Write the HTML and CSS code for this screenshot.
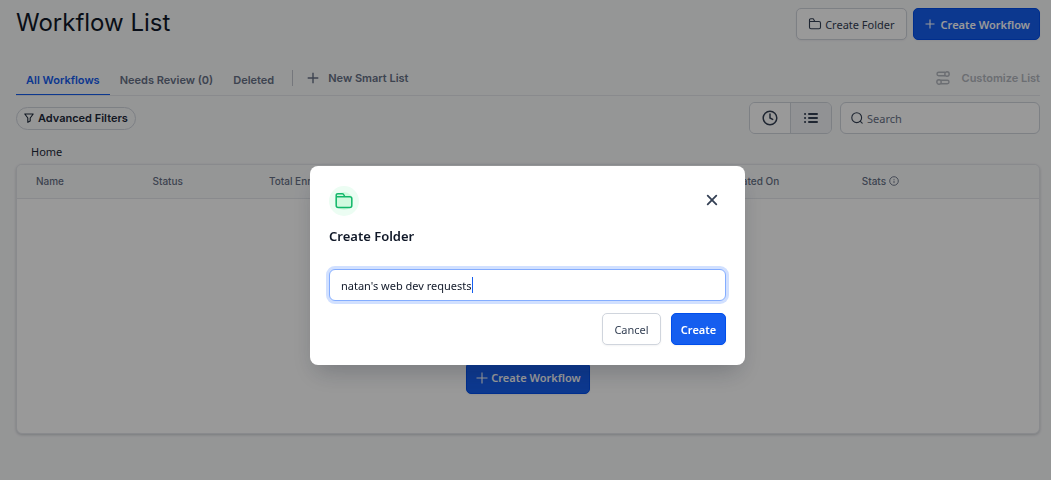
FILE: index.html
```html
<!DOCTYPE html>
<html lang="en">
<head>
<meta charset="utf-8">
<meta name="viewport" content="width=device-width, initial-scale=1">
<title>Workflow List</title>
<link rel="stylesheet" href="styles.css">
</head>
<body>
<main class="page">
  <header class="page-header">
    <h1 class="page-title">Workflow List</h1>
    <div class="header-actions">
      <button class="btn btn-folder" type="button">
        <svg class="icon" width="14" height="14" viewBox="0 0 14 14" fill="none" stroke="currentColor" stroke-width="1.1" stroke-linejoin="round"><path d="M1.5 4.5V3Q1.500 1.800 2.700 1.800H5.200L6.900 4.500M1.500 4.500H11Q12.500 4.500 12.500 6V10.200Q12.500 11.700 11 11.700H3Q1.500 11.700 1.500 10.200Z"/></svg>
        Create Folder
      </button>
      <button class="btn btn-primary btn-workflow" type="button">
        <svg class="icon" width="10" height="10" viewBox="0 0 10 10" stroke="currentColor" stroke-width="1.1"><path d="M5 .5v9M.5 5h9"/></svg>
        Create Workflow
      </button>
    </div>
  </header>

  <nav class="tabs">
    <a class="tab tab-active" href="#all">All Workflows</a>
    <a class="tab" href="#review">Needs Review (0)</a>
    <a class="tab" href="#deleted">Deleted</a>
    <span class="tab-divider"></span>
    <button class="tab-button" type="button">
      <svg class="icon" width="12" height="12" viewBox="0 0 12 12" stroke="currentColor" stroke-width="1.4"><path d="M6 .7v10.600M.7 6h10.600"/></svg>
      New Smart List
    </button>
    <button class="tab-button customize" type="button">
      <svg class="icon" width="14" height="14" viewBox="0 0 14 14" fill="none" stroke="currentColor" stroke-width="1.4"><path d="M9 1.300H2.700a1.700 1.700 0 0 0 0 3.400H9M5 9.300h6.300a1.700 1.700 0 0 1 0 3.400H5"/><circle cx="11" cy="3" r="2.200"/><circle cx="3" cy="11" r="2.200"/></svg>
      Customize List
    </button>
  </nav>

  <div class="toolbar">
    <button class="filter-pill" type="button">
      <svg class="icon" width="10" height="10" viewBox="0 0 10 10" fill="none" stroke="currentColor" stroke-width="1.100" stroke-linejoin="round"><path d="M.8 1h8.400L6.200 5v3L3.800 9.300V5Z"/></svg>
      Advanced Filters
    </button>
    <div class="toolbar-right">
      <div class="view-switch">
        <button class="view" type="button" aria-label="Recent">
          <svg class="icon" width="16" height="16" viewBox="0 0 16 16" fill="none" stroke="currentColor" stroke-width="1.500" stroke-linecap="round" stroke-linejoin="round"><circle cx="8" cy="8" r="6.800"/><path d="M8 4v4l2.700 1.400"/></svg>
        </button>
        <button class="view view-active" type="button" aria-label="List">
          <svg class="icon" width="16" height="16" viewBox="0 0 16 16" fill="none" stroke="currentColor" stroke-width="2" stroke-linecap="round"><path d="M6 4H14M6 8H14M6 12H14M2 4h.1M2 8h.1M2 12h.1"/></svg>
        </button>
      </div>
      <label class="search">
        <svg class="icon" width="12" height="12" viewBox="0 0 12 12" fill="none" stroke="currentColor" stroke-width="1.100" stroke-linecap="round"><circle cx="5.700" cy="5.700" r="4.900"/><path d="m9.300 9.300 1.900 1.900"/></svg>
        <input class="search-input" type="text" placeholder="Search" aria-label="Search">
      </label>
    </div>
  </div>

  <a class="breadcrumb" href="#home">Home</a>

  <section class="card">
    <table class="workflow-table">
      <thead>
        <tr>
          <th class="col-name">Name</th>
          <th class="col-status">Status</th>
          <th class="col-total">Total Enrolled</th>
          <th class="col-active">Active Enrolled</th>
          <th class="col-updated">Last Updated</th>
          <th class="col-created">Created On</th>
          <th class="col-stats"><span class="stats-label">Stats <svg class="icon" width="10" height="10" viewBox="0 0 10 10" fill="none" stroke="currentColor" stroke-width=".9"><circle cx="5" cy="5" r="4.300"/><path d="M5 4.700v2.400M5 2.900v.9"/></svg></span></th>
        </tr>
      </thead>
    </table>
    <div class="card-empty">
      <button class="btn btn-primary btn-empty" type="button">
        <svg class="icon" width="12" height="12" viewBox="0 0 12 12" stroke="currentColor" stroke-width="1.100"><path d="M6 .5v11M.5 6h11"/></svg>
        Create Workflow
      </button>
    </div>
  </section>
</main>

<div class="overlay">
  <form class="modal" role="dialog" aria-labelledby="modal-title">
    <div class="modal-top">
      <span class="modal-badge">
        <svg class="icon" width="20" height="20" viewBox="0 0 20 20" fill="none" stroke="#12b76a" stroke-width="1.500" stroke-linejoin="round"><circle cx="10" cy="10" r="9" fill="#d1fadf" stroke="none"/><path d="M2.200 6V4.400Q2.200 2.700 3.900 2.700H8.300Q9.500 2.700 10 4L10.700 5.700M2.200 5.700H15.800Q17.800 5.700 17.800 7.700V14.600Q17.800 16.600 15.800 16.600H4.200Q2.200 16.600 2.200 14.600Z"/></svg>
      </span>
      <button class="modal-close" type="button" aria-label="Close">
        <svg class="icon" width="12" height="12" viewBox="0 0 12 12" stroke="currentColor" stroke-width="1.800" stroke-linecap="round"><path d="m1.700 1.700 8.600 8.600M10.300 1.700l-8.600 8.600"/></svg>
      </button>
    </div>
    <h2 class="modal-title" id="modal-title">Create Folder</h2>
    <div class="name-field">
      <input class="name-input" type="text" value="natan's web dev requests" aria-label="Folder name">
      <span class="caret"></span>
    </div>
    <div class="modal-actions">
      <button class="btn btn-cancel" type="button">Cancel</button>
      <button class="btn btn-primary btn-create" type="submit">Create</button>
    </div>
  </form>
</div>
</body>
</html>
```
FILE: styles.css
```css
* {
  box-sizing: border-box;
}

body {
  margin: 0;
  background: #f9fafb;
  color: #101828;
  font-family: "Noto Sans", "Open Sans", sans-serif;
  font-size: 11px;
}

button,
input {
  font: inherit;
  margin: 0;
}

a {
  text-decoration: none;
}

.icon {
  display: block;
  flex: none;
}

.page {
  padding: 8px 11px 24px 16px;
}

.page-header {
  display: flex;
  justify-content: space-between;
  align-items: flex-start;
}

.page-title {
  margin: 0;
  font: 400 24px/30px Inter, sans-serif;
}

.header-actions {
  display: flex;
  gap: 6px;
}

.btn {
  display: flex;
  align-items: center;
  justify-content: center;
  height: 32px;
  border: 1px solid #d0d5dd;
  border-radius: 5px;
  background: #fff;
  color: #344054;
  box-shadow: 0 1px 2px rgba(16, 24, 40, 0.05);
  white-space: nowrap;
}

.btn-primary {
  border-color: #004eeb;
  background: #155eef;
  color: #fff;
  font-weight: 600;
}

.btn-folder {
  gap: 3px;
  padding: 0 11px;
}

.btn-workflow {
  gap: 6px;
  padding: 0 9px 0 11px;
}

.tabs {
  display: flex;
  align-items: stretch;
  height: 32px;
  margin-top: 24px;
  border-bottom: 1px solid #e4e7ec;
  font: 600 11px/16px Inter, sans-serif;
  color: #667085;
}

.tab {
  padding: 8px 10px 6px;
  color: inherit;
}

.tab-active {
  border-bottom: 1px solid #155eef;
  color: #155eef;
}

.tab-divider {
  width: 1px;
  height: 16px;
  margin: 6px 14px 0 8px;
  background: #c3c7cf;
}

.tab-button {
  display: flex;
  align-items: center;
  gap: 9px;
  height: 28px;
  padding: 0;
  border: 0;
  background: none;
  color: #667085;
}

.customize {
  gap: 12px;
  margin-left: auto;
  color: #b3b7be;
}

.toolbar {
  display: flex;
  align-items: center;
  justify-content: space-between;
  margin-top: 6px;
}

.filter-pill {
  display: flex;
  align-items: center;
  gap: 4px;
  height: 23px;
  padding: 0 7px;
  border: 1px solid #d0d5dd;
  border-radius: 12px;
  background: none;
  color: #1d2939;
  font: 600 11px/16px Inter, sans-serif;
}

.toolbar-right {
  display: flex;
  gap: 8px;
}

.view-switch {
  display: flex;
  border: 1px solid #d0d5dd;
  border-radius: 6px;
  overflow: hidden;
}

.view {
  display: flex;
  align-items: center;
  justify-content: center;
  width: 40px;
  height: 30px;
  padding: 0;
  border: 0;
  background: #fff;
  color: #344054;
}

.view-active {
  width: 41px;
  border-left: 1px solid #d0d5dd;
  background: #f2f4f7;
}

.search {
  display: flex;
  align-items: center;
  gap: 4px;
  width: 200px;
  height: 32px;
  padding: 0 10px;
  border: 1px solid #d0d5dd;
  border-radius: 6px;
  background: #fff;
  color: #344054;
}

.search-input {
  min-width: 0;
  flex: 1;
  padding: 0;
  border: 0;
  background: none;
}

.search-input::placeholder {
  color: #667085;
}

.breadcrumb {
  display: block;
  margin: 10px 15px 4px;
  color: #1d2939;
  line-height: 16px;
}

.card {
  border: 1px solid #e4e7ec;
  border-radius: 6px;
  background: #fff;
  box-shadow: 0 1px 3px rgba(16, 24, 40, 0.2);
  overflow: hidden;
}

.workflow-table {
  width: 100%;
  border-collapse: collapse;
  table-layout: fixed;
  background: #f9fafb;
  color: #667085;
  font: 500 10px/12px Inter, sans-serif;
}

.workflow-table th {
  height: 33px;
  padding: 0 0 1px 19px;
  border-bottom: 1px solid #e4e7ec;
  font-weight: 500;
  text-align: left;
}

.col-name,
.col-status {
  width: 11.4%;
}

.col-total {
  width: 13.6%;
}

.col-active,
.col-updated {
  width: 15.5%;
}

.col-created {
  width: 13.4%;
}

.stats-label {
  display: flex;
  align-items: center;
  gap: 3px;
}

.card-empty {
  display: flex;
  justify-content: center;
  padding: 163px 0 39px;
}

.btn-empty {
  gap: 3px;
  padding: 0 8px 0 9px;
}

.overlay {
  position: fixed;
  inset: 0;
  display: flex;
  align-items: flex-start;
  justify-content: center;
  padding: 166px 0 0 4px;
  background: rgba(0, 0, 0, 0.4);
}

.modal {
  width: 435px;
  padding: 20px 19px;
  border-radius: 8px;
  background: #fff;
  box-shadow: 0 12px 24px -6px rgba(16, 24, 40, 0.25);
}

.modal-top {
  display: flex;
  justify-content: space-between;
  align-items: flex-start;
}

.modal-badge {
  display: flex;
  align-items: center;
  justify-content: center;
  width: 30px;
  height: 30px;
  border-radius: 50%;
  background: #ecfdf3;
}

.modal-close {
  padding: 8px;
  border: 0;
  background: none;
  color: #344054;
}

.modal-title {
  margin: 10px 0 23px;
  font-size: 13px;
  font-weight: 600;
  line-height: 20px;
}

.name-field {
  position: relative;
}

.name-input {
  display: block;
  width: 100%;
  height: 32px;
  padding: 0 11px;
  border: 1px solid #84adff;
  border-radius: 6px;
  outline: none;
  background: #fff;
  color: #101828;
  box-shadow: 0 0 0 3px #d1e0ff;
}

.caret {
  position: absolute;
  top: 8px;
  left: 143px;
  width: 1px;
  height: 16px;
  background: #155eef;
}

.modal-actions {
  display: flex;
  justify-content: flex-end;
  gap: 10px;
  margin-top: 12px;
}

.btn-cancel {
  min-width: 59px;
  padding: 0 10px;
}

.btn-create {
  min-width: 55px;
  padding: 0 8px;
}
```
